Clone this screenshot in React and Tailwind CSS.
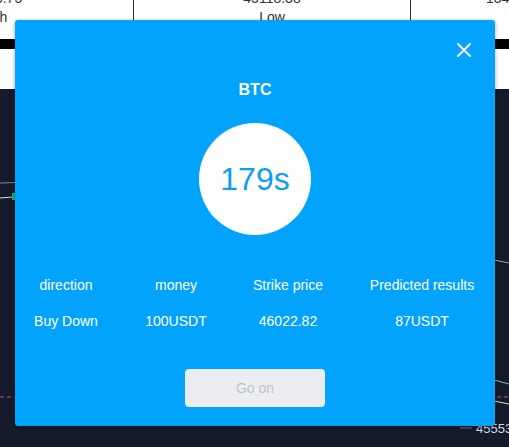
import React from 'react';

const cols = [
  { label: 'direction', value: 'Buy Down' },
  { label: 'money', value: '100USDT' },
  { label: 'Strike price', value: '46022.82' },
  { label: 'Predicted results', value: '87USDT' },
];

// background page: ticker header + dark chart area
const Background = () => (
  <div className="flex flex-col w-[509px] h-[447px] overflow-hidden">
    <div className="h-[39px] bg-white flex text-[14px] leading-[19px] text-[#333]">
      <div className="w-[133px] shrink-0 relative">
        <div className="absolute left-[-107px] w-[200px] top-[-11px] text-center">
          <div>46306.75</div>
          <div>High</div>
        </div>
      </div>
      <div className="w-[278px] shrink-0 border-x border-[#333] text-center mt-[-11px]">
        <div>45118.38</div>
        <div>Low</div>
      </div>
      <div className="flex-1 pl-[75px] mt-[-11px] whitespace-nowrap">
        <div>13466.28317652</div>
        <div className="pl-[30px]">24H Volume</div>
      </div>
    </div>
    <div className="h-[10px] bg-black" />
    <div className="h-[40px] bg-white" />
    <div className="flex-1 bg-[#151b2a] relative">
      <svg className="absolute inset-0" width="509" height="358" viewBox="0 89 509 358">
        <line x1="0" y1="183" x2="16" y2="182.5" stroke="#8d7fb8" strokeWidth="1" />
        <line x1="0" y1="198" x2="13" y2="197" stroke="#c9e6d9" strokeWidth="1" />
        <rect x="12" y="193" width="4" height="7" fill="#1fae7c" />
        <line x1="0" y1="397" x2="16" y2="397" stroke="#d2437c" strokeWidth="1" strokeDasharray="4 3" />
        <line x1="494" y1="260" x2="509" y2="263" stroke="#9aa3b5" strokeWidth="1" />
        <line x1="494" y1="380" x2="509" y2="384" stroke="#8ab8c2" strokeWidth="1" />
        <line x1="497" y1="397" x2="509" y2="397" stroke="#d2437c" strokeWidth="1" strokeDasharray="4 3" />
        <line x1="494" y1="401" x2="509" y2="404" stroke="#cfe3b8" strokeWidth="1" />
        <line x1="460" y1="428" x2="472" y2="428" stroke="#6b7387" strokeWidth="1" />
      </svg>
      <div className="absolute left-[476px] top-[333px] text-[13px] leading-[14px] text-[#d6d9e0]">45553.</div>
    </div>
  </div>
);

const App = () => {
  return (
    <div className="relative w-[509px] h-[447px] overflow-hidden" style={{ fontFamily: '"Liberation Sans", Arial, sans-serif' }}>
      <Background />

      {/* modal */}
      <div className="absolute left-[15px] top-[20px] w-[480px] h-[406px] bg-[#02a3fd] rounded-[3px] shadow-[0_1px_4px_rgba(0,0,0,0.35)] flex flex-col items-center">
        <button className="absolute left-[441px] top-[22px] w-[16px] h-[16px] flex items-center justify-center">
          <svg width="14" height="14" viewBox="0 0 14 14">
            <path d="M1 1L13 13M13 1L1 13" stroke="white" strokeWidth="1.8" strokeLinecap="round" />
          </svg>
        </button>

        <div className="mt-[58px] text-[16px] leading-[24px] font-bold text-white">BTC</div>

        <div className="mt-[21px] w-[112px] h-[112px] rounded-full bg-white flex items-center justify-center">
          <span className="text-[32px] leading-none text-[#109cf0]">179s</span>
        </div>

        <div className="mt-[40px] w-full grid grid-cols-[102px_118px_106px_154px] gap-y-[16px] text-[14px] leading-[20px] text-white text-center">
          {cols.map((c, i) => (
            <div key={c.label} className={i === 3 ? 'pl-2' : ''}>{c.label}</div>
          ))}
          {cols.map((c, i) => (
            <div key={c.value} className={i === 3 ? 'pl-2' : ''}>{c.value}</div>
          ))}
        </div>

        <button className="mt-[38px] w-[140px] h-[38px] rounded-[4px] bg-[#ebedf2] text-[14px] text-[#c0c4cc]">
          Go on
        </button>
      </div>
    </div>
  );
};

export default App;
